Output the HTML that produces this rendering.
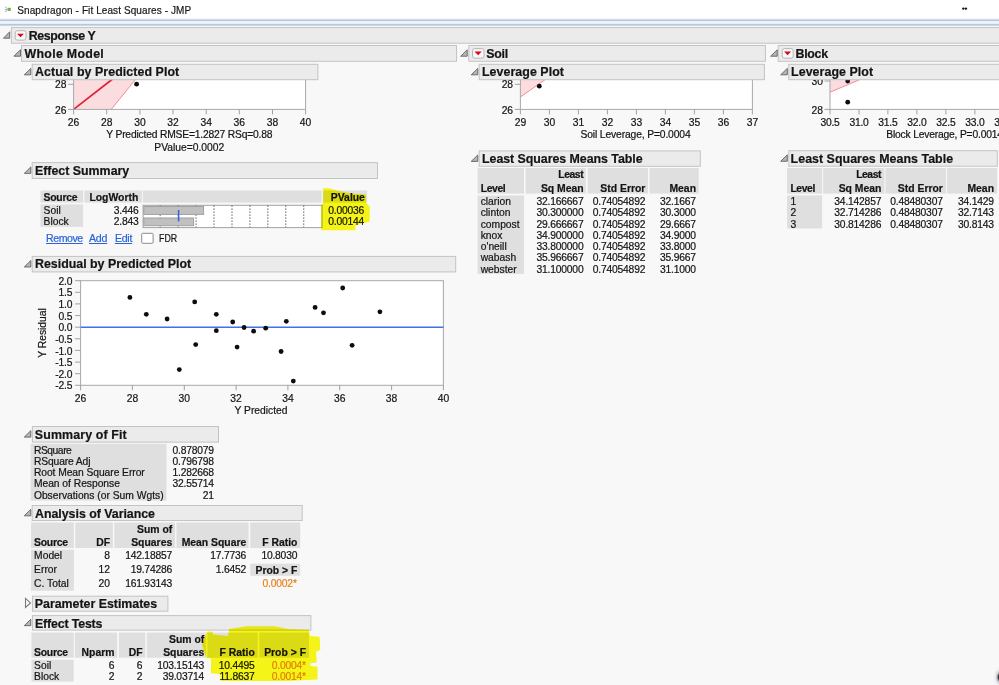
<!DOCTYPE html>
<html><head><meta charset="utf-8"><title>Snapdragon - Fit Least Squares - JMP</title><style>
html,body{margin:0;padding:0;overflow:hidden;background:#f8f8f8;}
#root{width:999px;height:685px;overflow:hidden;background:#f8f8f8;position:relative;font-family:"Liberation Sans",sans-serif;color:#141414;}
.ab{position:absolute;}
.cell{position:absolute;background:#dfdfdf;}
.hd{position:absolute;background:#ebebeb;border:1px solid #c4c4c4;box-sizing:border-box;}
.rb{position:absolute;background:#f6f6f6;border:1px solid #b9b9b9;border-radius:2.5px;box-sizing:border-box;}
.t{position:absolute;white-space:nowrap;line-height:1;-webkit-text-stroke:0.2px currentColor;}
</style></head>
<body>
<div id="root">
<svg class="ab" style="left:0;top:0" width="999" height="685" viewBox="0 0 999 685">
<rect x="0.00" y="0.00" width="999.00" height="18.60" fill="#fff"/>
<rect x="0.00" y="18.40" width="999.00" height="7.50" fill="#eff3f9"/>
<rect x="0.00" y="19.50" width="999.00" height="1.50" fill="#b3c7e0"/>
<rect x="0.00" y="23.90" width="999.00" height="1.90" fill="#b3c7e0"/>
<rect x="0.00" y="25.80" width="999.00" height="1.00" fill="#f8f6f3"/>
<g><path d="M5 6.7 L7.5 8.7 M4.8 9.4 L7.6 9.4 M5 11.9 L7.5 10.1" fill="none" stroke="#8d92cc" stroke-width="0.8"/><rect x="7.8" y="7.8" width="3" height="3.1" fill="#7cb233"/></g>
<circle cx="963.3" cy="8.6" r="1.2" fill="#111"/><circle cx="965.9" cy="8.6" r="1.2" fill="#111"/>
<defs><radialGradient id="blob" cx="0.5" cy="0.5" r="0.5"><stop offset="0" stop-color="#1e1e2e" stop-opacity="1"/><stop offset="0.27" stop-color="#1e1e2e" stop-opacity="0.9"/><stop offset="0.45" stop-color="#2a2a3a" stop-opacity="0.3"/><stop offset="0.7" stop-color="#444" stop-opacity="0.07"/><stop offset="1" stop-color="#444" stop-opacity="0"/></radialGradient></defs><ellipse cx="1000.2" cy="677.2" rx="7" ry="10.5" fill="url(#blob)"/>
<rect x="11.40" y="27.60" width="993.50" height="15.60" fill="#ebebeb" stroke="#c4c4c4" stroke-width="1" rx="0"/>
<polygon points="9.70,31.80 9.70,38.20 3.50,38.20" fill="#b6b6b6" stroke="#6c6c6c" stroke-width="1" stroke-linejoin="round"/>
<rect x="15.20" y="30.70" width="10.80" height="9.40" rx="2.2" fill="#f7f7f7" stroke="#b7b7b7" stroke-width="1"/>
<polygon points="17.06,33.63 23.90,33.63 20.48,37.27" fill="#d20c16"/>
<rect x="21.50" y="45.50" width="435.00" height="15.80" fill="#ebebeb" stroke="#c4c4c4" stroke-width="1" rx="0"/>
<polygon points="20.50,49.80 20.50,56.20 13.90,56.20" fill="#b6b6b6" stroke="#6c6c6c" stroke-width="1" stroke-linejoin="round"/>
<rect x="468.80" y="45.50" width="296.60" height="15.80" fill="#ebebeb" stroke="#c4c4c4" stroke-width="1" rx="0"/>
<polygon points="467.20,49.80 467.20,56.20 460.70,56.20" fill="#b6b6b6" stroke="#6c6c6c" stroke-width="1" stroke-linejoin="round"/>
<rect x="472.50" y="48.60" width="11.50" height="9.60" rx="2.2" fill="#f7f7f7" stroke="#b7b7b7" stroke-width="1"/>
<polygon points="474.50,51.60 481.75,51.60 478.12,55.31" fill="#d20c16"/>
<rect x="778.20" y="45.50" width="226.70" height="15.80" fill="#ebebeb" stroke="#c4c4c4" stroke-width="1" rx="0"/>
<polygon points="777.20,49.80 777.20,56.20 770.70,56.20" fill="#b6b6b6" stroke="#6c6c6c" stroke-width="1" stroke-linejoin="round"/>
<rect x="782.20" y="48.60" width="11.00" height="9.60" rx="2.2" fill="#f7f7f7" stroke="#b7b7b7" stroke-width="1"/>
<polygon points="784.10,51.60 791.06,51.60 787.58,55.31" fill="#d20c16"/>
<rect x="73.6" y="79" width="232.00000000000003" height="30.400000000000006" fill="#fff"/>
<polygon points="73.6,79 135.6,79 111.2,109.4 73.6,109.4" fill="#fbdcdf"/>
<line x1="111.2" y1="109.4" x2="135.8" y2="79" stroke="#f48c98" stroke-width="1"/>
<line x1="73.6" y1="109.4" x2="112.6" y2="79" stroke="#e3203a" stroke-width="1.7"/>
<circle cx="136.6" cy="84.2" r="2.4" fill="#0c0c0c"/>
<path d="M73.6 79 V109.4 H305.6 V79" fill="none" stroke="#a8a8a8" stroke-width="1"/>
<line x1="73.6" y1="109.4" x2="73.6" y2="114.4" stroke="#a0a0a0" stroke-width="1"/>
<line x1="106.7" y1="109.4" x2="106.7" y2="114.4" stroke="#a0a0a0" stroke-width="1"/>
<line x1="139.9" y1="109.4" x2="139.9" y2="114.4" stroke="#a0a0a0" stroke-width="1"/>
<line x1="173.0" y1="109.4" x2="173.0" y2="114.4" stroke="#a0a0a0" stroke-width="1"/>
<line x1="206.2" y1="109.4" x2="206.2" y2="114.4" stroke="#a0a0a0" stroke-width="1"/>
<line x1="239.3" y1="109.4" x2="239.3" y2="114.4" stroke="#a0a0a0" stroke-width="1"/>
<line x1="272.5" y1="109.4" x2="272.5" y2="114.4" stroke="#a0a0a0" stroke-width="1"/>
<line x1="305.6" y1="109.4" x2="305.6" y2="114.4" stroke="#a0a0a0" stroke-width="1"/>
<line x1="68.1" y1="84.3" x2="73.6" y2="84.3" stroke="#a0a0a0" stroke-width="1"/>
<line x1="68.1" y1="109.4" x2="73.6" y2="109.4" stroke="#a0a0a0" stroke-width="1"/>
<rect x="80.6" y="280.7" width="362.79999999999995" height="104.60000000000002" fill="#fff" stroke="#a8a8a8" stroke-width="1"/>
<line x1="80.6" y1="327.2" x2="443.4" y2="327.2" stroke="#3d72ec" stroke-width="1.5"/>
<line x1="80.6" y1="385.3" x2="80.6" y2="390.3" stroke="#a0a0a0" stroke-width="1"/>
<line x1="132.4" y1="385.3" x2="132.4" y2="390.3" stroke="#a0a0a0" stroke-width="1"/>
<line x1="184.3" y1="385.3" x2="184.3" y2="390.3" stroke="#a0a0a0" stroke-width="1"/>
<line x1="236.1" y1="385.3" x2="236.1" y2="390.3" stroke="#a0a0a0" stroke-width="1"/>
<line x1="287.9" y1="385.3" x2="287.9" y2="390.3" stroke="#a0a0a0" stroke-width="1"/>
<line x1="339.7" y1="385.3" x2="339.7" y2="390.3" stroke="#a0a0a0" stroke-width="1"/>
<line x1="391.6" y1="385.3" x2="391.6" y2="390.3" stroke="#a0a0a0" stroke-width="1"/>
<line x1="443.4" y1="385.3" x2="443.4" y2="390.3" stroke="#a0a0a0" stroke-width="1"/>
<line x1="75.1" y1="280.7" x2="80.6" y2="280.7" stroke="#a0a0a0" stroke-width="1"/>
<line x1="75.1" y1="292.3" x2="80.6" y2="292.3" stroke="#a0a0a0" stroke-width="1"/>
<line x1="75.1" y1="303.9" x2="80.6" y2="303.9" stroke="#a0a0a0" stroke-width="1"/>
<line x1="75.1" y1="315.6" x2="80.6" y2="315.6" stroke="#a0a0a0" stroke-width="1"/>
<line x1="75.1" y1="327.2" x2="80.6" y2="327.2" stroke="#a0a0a0" stroke-width="1"/>
<line x1="75.1" y1="338.8" x2="80.6" y2="338.8" stroke="#a0a0a0" stroke-width="1"/>
<line x1="75.1" y1="350.4" x2="80.6" y2="350.4" stroke="#a0a0a0" stroke-width="1"/>
<line x1="75.1" y1="362.1" x2="80.6" y2="362.1" stroke="#a0a0a0" stroke-width="1"/>
<line x1="75.1" y1="373.7" x2="80.6" y2="373.7" stroke="#a0a0a0" stroke-width="1"/>
<line x1="75.1" y1="385.3" x2="80.6" y2="385.3" stroke="#a0a0a0" stroke-width="1"/>
<circle cx="129.9" cy="297.4" r="2.4" fill="#0c0c0c"/>
<circle cx="146.3" cy="314.3" r="2.4" fill="#0c0c0c"/>
<circle cx="167.1" cy="319.0" r="2.4" fill="#0c0c0c"/>
<circle cx="179.3" cy="369.6" r="2.4" fill="#0c0c0c"/>
<circle cx="194.7" cy="301.9" r="2.4" fill="#0c0c0c"/>
<circle cx="195.7" cy="344.6" r="2.4" fill="#0c0c0c"/>
<circle cx="216.3" cy="314.3" r="2.4" fill="#0c0c0c"/>
<circle cx="216.3" cy="330.7" r="2.4" fill="#0c0c0c"/>
<circle cx="232.7" cy="322.0" r="2.4" fill="#0c0c0c"/>
<circle cx="237.1" cy="347.1" r="2.4" fill="#0c0c0c"/>
<circle cx="244.1" cy="327.5" r="2.4" fill="#0c0c0c"/>
<circle cx="253.6" cy="331.2" r="2.4" fill="#0c0c0c"/>
<circle cx="265.7" cy="328.2" r="2.4" fill="#0c0c0c"/>
<circle cx="281.1" cy="351.5" r="2.4" fill="#0c0c0c"/>
<circle cx="286.3" cy="321.3" r="2.4" fill="#0c0c0c"/>
<circle cx="293.3" cy="381.1" r="2.4" fill="#0c0c0c"/>
<circle cx="315.1" cy="307.4" r="2.4" fill="#0c0c0c"/>
<circle cx="323.5" cy="312.8" r="2.4" fill="#0c0c0c"/>
<circle cx="342.7" cy="288.0" r="2.4" fill="#0c0c0c"/>
<circle cx="352.1" cy="345.3" r="2.4" fill="#0c0c0c"/>
<circle cx="379.9" cy="311.8" r="2.4" fill="#0c0c0c"/>
<rect x="520.4" y="79" width="232.0" height="30.400000000000006" fill="#fff"/>
<polygon points="520.4,79 545.8,79 520.4,97" fill="#fbdcdf"/>
<line x1="520.4" y1="97" x2="546" y2="79" stroke="#f48c98" stroke-width="1"/>
<circle cx="539.3" cy="86.2" r="2.4" fill="#0c0c0c"/>
<path d="M520.4 79 V109.4 H752.4 V79" fill="none" stroke="#a8a8a8" stroke-width="1"/>
<line x1="520.4" y1="109.4" x2="520.4" y2="114.4" stroke="#a0a0a0" stroke-width="1"/>
<line x1="549.4" y1="109.4" x2="549.4" y2="114.4" stroke="#a0a0a0" stroke-width="1"/>
<line x1="578.4" y1="109.4" x2="578.4" y2="114.4" stroke="#a0a0a0" stroke-width="1"/>
<line x1="607.4" y1="109.4" x2="607.4" y2="114.4" stroke="#a0a0a0" stroke-width="1"/>
<line x1="636.4" y1="109.4" x2="636.4" y2="114.4" stroke="#a0a0a0" stroke-width="1"/>
<line x1="665.4" y1="109.4" x2="665.4" y2="114.4" stroke="#a0a0a0" stroke-width="1"/>
<line x1="694.4" y1="109.4" x2="694.4" y2="114.4" stroke="#a0a0a0" stroke-width="1"/>
<line x1="723.4" y1="109.4" x2="723.4" y2="114.4" stroke="#a0a0a0" stroke-width="1"/>
<line x1="752.4" y1="109.4" x2="752.4" y2="114.4" stroke="#a0a0a0" stroke-width="1"/>
<line x1="514.9" y1="84.3" x2="520.4" y2="84.3" stroke="#a0a0a0" stroke-width="1"/>
<line x1="514.9" y1="109.4" x2="520.4" y2="109.4" stroke="#a0a0a0" stroke-width="1"/>
<rect x="830.0" y="79" width="175.0" height="30.400000000000006" fill="#fff"/>
<polygon points="830.0,79 861,79 830.0,92.2" fill="#fbdcdf"/>
<line x1="830.0" y1="92.2" x2="861.2" y2="79" stroke="#f48c98" stroke-width="1"/>
<circle cx="847.7" cy="81" r="2.4" fill="#0c0c0c"/>
<circle cx="847.7" cy="102.2" r="2.4" fill="#0c0c0c"/>
<path d="M830.0 79 V109.4 H1005" fill="none" stroke="#a8a8a8" stroke-width="1"/>
<line x1="830.0" y1="109.4" x2="830.0" y2="114.4" stroke="#a0a0a0" stroke-width="1"/>
<line x1="859.0" y1="109.4" x2="859.0" y2="114.4" stroke="#a0a0a0" stroke-width="1"/>
<line x1="887.9" y1="109.4" x2="887.9" y2="114.4" stroke="#a0a0a0" stroke-width="1"/>
<line x1="916.9" y1="109.4" x2="916.9" y2="114.4" stroke="#a0a0a0" stroke-width="1"/>
<line x1="945.9" y1="109.4" x2="945.9" y2="114.4" stroke="#a0a0a0" stroke-width="1"/>
<line x1="974.9" y1="109.4" x2="974.9" y2="114.4" stroke="#a0a0a0" stroke-width="1"/>
<line x1="1003.8" y1="109.4" x2="1003.8" y2="114.4" stroke="#a0a0a0" stroke-width="1"/>
<line x1="824.5" y1="81" x2="830.0" y2="81" stroke="#a0a0a0" stroke-width="1"/>
<line x1="824.5" y1="109.4" x2="830.0" y2="109.4" stroke="#a0a0a0" stroke-width="1"/>
<rect x="32.20" y="64.30" width="285.70" height="15.40" fill="#ebebeb" stroke="#c4c4c4" stroke-width="1" rx="0"/>
<polygon points="30.80,68.40 30.80,74.80 24.30,74.80" fill="#b6b6b6" stroke="#6c6c6c" stroke-width="1" stroke-linejoin="round"/>
<rect x="479.20" y="64.30" width="285.20" height="15.40" fill="#ebebeb" stroke="#c4c4c4" stroke-width="1" rx="0"/>
<polygon points="477.80,68.40 477.80,74.80 471.20,74.80" fill="#b6b6b6" stroke="#6c6c6c" stroke-width="1" stroke-linejoin="round"/>
<rect x="788.80" y="64.30" width="216.10" height="15.40" fill="#ebebeb" stroke="#c4c4c4" stroke-width="1" rx="0"/>
<polygon points="787.30,68.40 787.30,74.80 780.70,74.80" fill="#b6b6b6" stroke="#6c6c6c" stroke-width="1" stroke-linejoin="round"/>
<rect x="32.20" y="162.60" width="345.30" height="15.90" fill="#ebebeb" stroke="#c4c4c4" stroke-width="1" rx="0"/>
<polygon points="30.80,166.95 30.80,173.35 24.30,173.35" fill="#b6b6b6" stroke="#6c6c6c" stroke-width="1" stroke-linejoin="round"/>
<rect x="40.45" y="190.50" width="42.70" height="12.10" fill="#dfdfdf"/>
<rect x="84.35" y="190.50" width="57.60" height="12.10" fill="#dfdfdf"/>
<rect x="142.85" y="190.50" width="178.80" height="12.10" fill="#dfdfdf"/>
<rect x="322.75" y="190.50" width="44.40" height="12.10" fill="#dfdfdf"/>
<rect x="40.45" y="204.40" width="42.70" height="22.50" fill="#dfdfdf"/>
<rect x="143.1" y="205.3" width="178.9" height="22.3" fill="#fff" stroke="#a2a2a2" stroke-width="1"/>
<line x1="160.2" y1="205.5" x2="160.2" y2="227.3" stroke="#666" stroke-width="1.25" stroke-dasharray="1.3,1.7"/>
<line x1="178.2" y1="205.5" x2="178.2" y2="227.3" stroke="#666" stroke-width="1.25" stroke-dasharray="1.3,1.7"/>
<line x1="196.1" y1="205.5" x2="196.1" y2="227.3" stroke="#666" stroke-width="1.25" stroke-dasharray="1.3,1.7"/>
<line x1="214.0" y1="205.5" x2="214.0" y2="227.3" stroke="#666" stroke-width="1.25" stroke-dasharray="1.3,1.7"/>
<line x1="232.0" y1="205.5" x2="232.0" y2="227.3" stroke="#666" stroke-width="1.25" stroke-dasharray="1.3,1.7"/>
<line x1="249.9" y1="205.5" x2="249.9" y2="227.3" stroke="#666" stroke-width="1.25" stroke-dasharray="1.3,1.7"/>
<line x1="267.8" y1="205.5" x2="267.8" y2="227.3" stroke="#666" stroke-width="1.25" stroke-dasharray="1.3,1.7"/>
<line x1="285.7" y1="205.5" x2="285.7" y2="227.3" stroke="#666" stroke-width="1.25" stroke-dasharray="1.3,1.7"/>
<line x1="303.7" y1="205.5" x2="303.7" y2="227.3" stroke="#666" stroke-width="1.25" stroke-dasharray="1.3,1.7"/>
<rect x="143.8" y="206.5" width="59.8" height="7.9" fill="#c0c0c0" stroke="#a0a0a0" stroke-width="1"/>
<rect x="143.8" y="218.0" width="49.8" height="7.7" fill="#c0c0c0" stroke="#a0a0a0" stroke-width="1"/>
<line x1="178.6" y1="210" x2="178.6" y2="221.4" stroke="#2f62e4" stroke-width="1.5"/>
<rect x="141.70" y="233.30" width="11.40" height="10.00" fill="#fff" stroke="#8c8c8c" stroke-width="1" rx="1"/>
<rect x="32.20" y="256.40" width="423.50" height="15.50" fill="#ebebeb" stroke="#c4c4c4" stroke-width="1" rx="0"/>
<polygon points="30.80,260.55 30.80,266.95 24.30,266.95" fill="#b6b6b6" stroke="#6c6c6c" stroke-width="1" stroke-linejoin="round"/>
<rect x="32.40" y="426.50" width="186.10" height="15.60" fill="#ebebeb" stroke="#c4c4c4" stroke-width="1" rx="0"/>
<polygon points="30.80,430.70 30.80,437.10 24.30,437.10" fill="#b6b6b6" stroke="#6c6c6c" stroke-width="1" stroke-linejoin="round"/>
<rect x="30.65" y="443.80" width="135.80" height="56.80" fill="#dfdfdf"/>
<rect x="32.20" y="505.50" width="270.00" height="15.00" fill="#ebebeb" stroke="#c4c4c4" stroke-width="1" rx="0"/>
<polygon points="30.80,509.40 30.80,515.80 24.30,515.80" fill="#b6b6b6" stroke="#6c6c6c" stroke-width="1" stroke-linejoin="round"/>
<rect x="31.05" y="522.50" width="42.80" height="25.50" fill="#dfdfdf"/>
<rect x="75.25" y="522.50" width="37.60" height="25.50" fill="#dfdfdf"/>
<rect x="114.25" y="522.50" width="60.80" height="25.50" fill="#dfdfdf"/>
<rect x="176.45" y="522.50" width="72.10" height="25.50" fill="#dfdfdf"/>
<rect x="250.25" y="522.50" width="50.00" height="25.50" fill="#dfdfdf"/>
<rect x="31.05" y="549.60" width="42.80" height="41.10" fill="#dfdfdf"/>
<rect x="250.25" y="563.70" width="50.00" height="12.10" fill="#dfdfdf"/>
<rect x="32.50" y="596.20" width="135.40" height="15.00" fill="#ebebeb" stroke="#c4c4c4" stroke-width="1" rx="0"/>
<polygon points="25.50,598.40 30.50,602.90 25.50,607.40" fill="#fbfbfb" stroke="#7a7a7a" stroke-width="1.1"/>
<rect x="32.50" y="615.60" width="278.40" height="14.50" fill="#ebebeb" stroke="#c4c4c4" stroke-width="1" rx="0"/>
<polygon points="30.80,619.25 30.80,625.65 24.30,625.65" fill="#b6b6b6" stroke="#6c6c6c" stroke-width="1" stroke-linejoin="round"/>
<rect x="31.45" y="632.60" width="42.30" height="25.10" fill="#dfdfdf"/>
<rect x="74.85" y="632.60" width="42.30" height="25.10" fill="#dfdfdf"/>
<rect x="118.95" y="632.60" width="26.40" height="25.10" fill="#dfdfdf"/>
<rect x="146.85" y="632.60" width="59.10" height="25.10" fill="#dfdfdf"/>
<rect x="207.35" y="632.60" width="50.40" height="25.10" fill="#dfdfdf"/>
<rect x="259.25" y="632.60" width="49.70" height="25.10" fill="#dfdfdf"/>
<rect x="31.45" y="659.80" width="42.30" height="21.80" fill="#dfdfdf"/>
<rect x="479.20" y="150.90" width="221.10" height="15.40" fill="#ebebeb" stroke="#c4c4c4" stroke-width="1" rx="0"/>
<polygon points="477.80,155.00 477.80,161.40 471.20,161.40" fill="#b6b6b6" stroke="#6c6c6c" stroke-width="1" stroke-linejoin="round"/>
<rect x="477.65" y="168.00" width="46.40" height="25.60" fill="#dfdfdf"/>
<rect x="525.65" y="168.00" width="60.10" height="25.60" fill="#dfdfdf"/>
<rect x="587.65" y="168.00" width="60.30" height="25.60" fill="#dfdfdf"/>
<rect x="649.55" y="168.00" width="49.20" height="25.60" fill="#dfdfdf"/>
<rect x="477.65" y="195.50" width="46.40" height="78.40" fill="#dfdfdf"/>
<rect x="788.80" y="150.70" width="208.50" height="15.50" fill="#ebebeb" stroke="#c4c4c4" stroke-width="1" rx="0"/>
<polygon points="787.30,154.85 787.30,161.25 780.70,161.25" fill="#b6b6b6" stroke="#6c6c6c" stroke-width="1" stroke-linejoin="round"/>
<rect x="787.05" y="168.00" width="35.10" height="25.60" fill="#dfdfdf"/>
<rect x="823.15" y="168.00" width="61.30" height="25.60" fill="#dfdfdf"/>
<rect x="885.45" y="168.00" width="60.60" height="25.60" fill="#dfdfdf"/>
<rect x="947.05" y="168.00" width="50.10" height="25.60" fill="#dfdfdf"/>
<rect x="787.05" y="195.40" width="35.10" height="33.10" fill="#dfdfdf"/>
</svg>
<div class="t" style="top:6.00px;font-size:10.0px;color:#1a1a1a;left:17.3px;letter-spacing:0.093px;">Snapdragon - Fit Least Squares - JMP</div>
<div class="t" style="top:30.00px;font-size:12.4px;font-weight:bold;left:28.8px;letter-spacing:-0.420px;">Response Y</div>
<div class="t" style="top:48.00px;font-size:12.4px;font-weight:bold;left:24.5px;letter-spacing:0.290px;">Whole Model</div>
<div class="t" style="top:48.00px;font-size:12.4px;font-weight:bold;left:486.3px;letter-spacing:-0.305px;">Soil</div>
<div class="t" style="top:48.00px;font-size:12.4px;font-weight:bold;left:795.6px;letter-spacing:-0.310px;">Block</div>
<div class="t" style="top:118.00px;font-size:10.3px;left:73.6px;transform:translateX(-50%);">26</div>
<div class="t" style="top:118.00px;font-size:10.3px;left:106.7px;transform:translateX(-50%);">28</div>
<div class="t" style="top:118.00px;font-size:10.3px;left:139.9px;transform:translateX(-50%);">30</div>
<div class="t" style="top:118.00px;font-size:10.3px;left:173.0px;transform:translateX(-50%);">32</div>
<div class="t" style="top:118.00px;font-size:10.3px;left:206.2px;transform:translateX(-50%);">34</div>
<div class="t" style="top:118.00px;font-size:10.3px;left:239.3px;transform:translateX(-50%);">36</div>
<div class="t" style="top:118.00px;font-size:10.3px;left:272.5px;transform:translateX(-50%);">38</div>
<div class="t" style="top:118.00px;font-size:10.3px;left:305.6px;transform:translateX(-50%);">40</div>
<div class="t" style="top:80.00px;font-size:10.3px;right:932.50px;">28</div>
<div class="t" style="top:106.00px;font-size:10.3px;right:932.50px;">26</div>
<div class="t" style="top:130.00px;font-size:10.3px;left:189.3px;transform:translateX(-50%);letter-spacing:-0.191px;">Y Predicted RMSE=1.2827 RSq=0.88</div>
<div class="t" style="top:143.00px;font-size:10.3px;left:189.3px;transform:translateX(-50%);">PValue=0.0002</div>
<div class="t" style="top:118.00px;font-size:10.3px;left:520.4px;transform:translateX(-50%);">29</div>
<div class="t" style="top:118.00px;font-size:10.3px;left:549.4px;transform:translateX(-50%);">30</div>
<div class="t" style="top:118.00px;font-size:10.3px;left:578.4px;transform:translateX(-50%);">31</div>
<div class="t" style="top:118.00px;font-size:10.3px;left:607.4px;transform:translateX(-50%);">32</div>
<div class="t" style="top:118.00px;font-size:10.3px;left:636.4px;transform:translateX(-50%);">33</div>
<div class="t" style="top:118.00px;font-size:10.3px;left:665.4px;transform:translateX(-50%);">34</div>
<div class="t" style="top:118.00px;font-size:10.3px;left:694.4px;transform:translateX(-50%);">35</div>
<div class="t" style="top:118.00px;font-size:10.3px;left:723.4px;transform:translateX(-50%);">36</div>
<div class="t" style="top:118.00px;font-size:10.3px;left:752.4px;transform:translateX(-50%);">37</div>
<div class="t" style="top:80.00px;font-size:10.3px;right:485.90px;">28</div>
<div class="t" style="top:106.00px;font-size:10.3px;right:485.90px;">26</div>
<div class="t" style="top:130.00px;font-size:10.3px;left:635.5px;transform:translateX(-50%);letter-spacing:-0.134px;">Soil Leverage, P=0.0004</div>
<div class="t" style="top:118.00px;font-size:10.3px;left:830.0px;transform:translateX(-50%);letter-spacing:-0.200px;">30.5</div>
<div class="t" style="top:118.00px;font-size:10.3px;left:859.0px;transform:translateX(-50%);letter-spacing:-0.200px;">31.0</div>
<div class="t" style="top:118.00px;font-size:10.3px;left:887.9px;transform:translateX(-50%);letter-spacing:-0.200px;">31.5</div>
<div class="t" style="top:118.00px;font-size:10.3px;left:916.9px;transform:translateX(-50%);letter-spacing:-0.200px;">32.0</div>
<div class="t" style="top:118.00px;font-size:10.3px;left:945.9px;transform:translateX(-50%);letter-spacing:-0.200px;">32.5</div>
<div class="t" style="top:118.00px;font-size:10.3px;left:974.9px;transform:translateX(-50%);letter-spacing:-0.200px;">33.0</div>
<div class="t" style="top:118.00px;font-size:10.3px;left:1003.8px;transform:translateX(-50%);letter-spacing:-0.200px;">33.5</div>
<div class="t" style="top:77.00px;font-size:10.3px;right:176.00px;clip-path:inset(2.9px 0 0 0);">30</div>
<div class="t" style="top:106.00px;font-size:10.3px;right:176.00px;">28</div>
<div class="t" style="top:130.00px;font-size:10.3px;left:886.3px;letter-spacing:-0.191px;">Block Leverage, P=0.0014</div>
<div class="t" style="top:66.00px;font-size:12.4px;font-weight:bold;left:35.1px;letter-spacing:0.070px;">Actual by Predicted Plot</div>
<div class="t" style="top:66.00px;font-size:12.4px;font-weight:bold;left:482.0px;letter-spacing:0.056px;">Leverage Plot</div>
<div class="t" style="top:66.00px;font-size:12.4px;font-weight:bold;left:791.1px;letter-spacing:0.056px;">Leverage Plot</div>
<div class="t" style="top:165.00px;font-size:12.4px;font-weight:bold;left:35.0px;letter-spacing:-0.010px;">Effect Summary</div>
<div class="t" style="top:193.00px;font-size:10.4px;font-weight:bold;left:43.6px;letter-spacing:-0.272px;">Source</div>
<div class="t" style="top:193.00px;font-size:10.4px;font-weight:bold;left:89.4px;">LogWorth</div>
<div class="t" style="top:193.00px;font-size:10.4px;font-weight:bold;right:634.10px;">PValue</div>
<div class="t" style="top:206.00px;font-size:10.3px;left:43.6px;">Soil</div>
<div class="t" style="top:217.00px;font-size:10.3px;left:43.6px;">Block</div>
<div class="t" style="top:206.00px;font-size:10.3px;right:860.40px;letter-spacing:-0.200px;">3.446</div>
<div class="t" style="top:217.00px;font-size:10.3px;right:860.40px;letter-spacing:-0.200px;">2.843</div>
<div class="t" style="top:206.00px;font-size:10.3px;right:634.90px;letter-spacing:-0.200px;">0.00036</div>
<div class="t" style="top:217.00px;font-size:10.3px;right:634.90px;letter-spacing:-0.200px;">0.00144</div>
<div class="t" style="top:233.00px;font-size:10.600000000000001px;color:#2a62d8;left:46.0px;text-decoration:underline;text-decoration-thickness:0.8px;text-underline-offset:1px;letter-spacing:-0.442px;">Remove</div>
<div class="t" style="top:233.00px;font-size:10.600000000000001px;color:#2a62d8;left:88.9px;text-decoration:underline;text-decoration-thickness:0.8px;text-underline-offset:1px;letter-spacing:-0.153px;">Add</div>
<div class="t" style="top:233.00px;font-size:10.600000000000001px;color:#2a62d8;left:114.9px;text-decoration:underline;text-decoration-thickness:0.8px;text-underline-offset:1px;letter-spacing:-0.266px;">Edit</div>
<div class="t" style="top:234.00px;font-size:10.3px;left:158.6px;transform:scaleX(0.86);transform-origin:0 0;">FDR</div>
<div class="t" style="top:258.00px;font-size:12.4px;font-weight:bold;left:35.0px;letter-spacing:-0.004px;">Residual by Predicted Plot</div>
<div class="t" style="top:394.00px;font-size:10.3px;left:80.6px;transform:translateX(-50%);">26</div>
<div class="t" style="top:394.00px;font-size:10.3px;left:132.4px;transform:translateX(-50%);">28</div>
<div class="t" style="top:394.00px;font-size:10.3px;left:184.3px;transform:translateX(-50%);">30</div>
<div class="t" style="top:394.00px;font-size:10.3px;left:236.1px;transform:translateX(-50%);">32</div>
<div class="t" style="top:394.00px;font-size:10.3px;left:287.9px;transform:translateX(-50%);">34</div>
<div class="t" style="top:394.00px;font-size:10.3px;left:339.7px;transform:translateX(-50%);">36</div>
<div class="t" style="top:394.00px;font-size:10.3px;left:391.6px;transform:translateX(-50%);">38</div>
<div class="t" style="top:394.00px;font-size:10.3px;left:443.4px;transform:translateX(-50%);">40</div>
<div class="t" style="top:277.00px;font-size:10.3px;right:926.70px;letter-spacing:-0.200px;">2.0</div>
<div class="t" style="top:288.00px;font-size:10.3px;right:926.70px;letter-spacing:-0.200px;">1.5</div>
<div class="t" style="top:300.00px;font-size:10.3px;right:926.70px;letter-spacing:-0.200px;">1.0</div>
<div class="t" style="top:312.00px;font-size:10.3px;right:926.70px;letter-spacing:-0.200px;">0.5</div>
<div class="t" style="top:323.00px;font-size:10.3px;right:926.70px;letter-spacing:-0.200px;">0.0</div>
<div class="t" style="top:335.00px;font-size:10.3px;right:926.70px;letter-spacing:-0.200px;">-0.5</div>
<div class="t" style="top:347.00px;font-size:10.3px;right:926.70px;letter-spacing:-0.200px;">-1.0</div>
<div class="t" style="top:358.00px;font-size:10.3px;right:926.70px;letter-spacing:-0.200px;">-1.5</div>
<div class="t" style="top:370.00px;font-size:10.3px;right:926.70px;letter-spacing:-0.200px;">-2.0</div>
<div class="t" style="top:381.00px;font-size:10.3px;right:926.70px;letter-spacing:-0.200px;">-2.5</div>
<div class="t" style="top:406.00px;font-size:10.3px;left:261.0px;transform:translateX(-50%);">Y Predicted</div>
<div class="t" style="left:43.3px;top:332.7px;font-size:10.3px;transform:translate(-50%,-50%) rotate(-90deg);">Y Residual</div>
<div class="t" style="top:429.00px;font-size:12.4px;font-weight:bold;left:34.8px;letter-spacing:0.135px;">Summary of Fit</div>
<div class="t" style="top:446.00px;font-size:10.3px;left:33.9px;letter-spacing:-0.449px;">RSquare</div>
<div class="t" style="top:446.00px;font-size:10.3px;right:785.10px;letter-spacing:-0.200px;">0.878079</div>
<div class="t" style="top:457.00px;font-size:10.3px;left:33.9px;letter-spacing:-0.121px;">RSquare Adj</div>
<div class="t" style="top:457.00px;font-size:10.3px;right:785.10px;letter-spacing:-0.200px;">0.796798</div>
<div class="t" style="top:468.00px;font-size:10.3px;left:33.9px;letter-spacing:-0.063px;">Root Mean Square Error</div>
<div class="t" style="top:468.00px;font-size:10.3px;right:785.10px;letter-spacing:-0.200px;">1.282668</div>
<div class="t" style="top:479.00px;font-size:10.3px;left:33.9px;letter-spacing:-0.027px;">Mean of Response</div>
<div class="t" style="top:479.00px;font-size:10.3px;right:785.10px;letter-spacing:-0.200px;">32.55714</div>
<div class="t" style="top:491.00px;font-size:10.3px;left:33.9px;letter-spacing:-0.007px;">Observations (or Sum Wgts)</div>
<div class="t" style="top:491.00px;font-size:10.3px;right:784.90px;">21</div>
<div class="t" style="top:508.00px;font-size:12.4px;font-weight:bold;left:35.0px;letter-spacing:-0.027px;">Analysis of Variance</div>
<div class="t" style="top:538.00px;font-size:10.4px;font-weight:bold;left:34.1px;letter-spacing:-0.272px;">Source</div>
<div class="t" style="top:538.00px;font-size:10.4px;font-weight:bold;right:889.00px;">DF</div>
<div class="t" style="top:525.00px;font-size:10.4px;font-weight:bold;right:826.80px;">Sum of</div>
<div class="t" style="top:538.00px;font-size:10.4px;font-weight:bold;right:826.80px;">Squares</div>
<div class="t" style="top:538.00px;font-size:10.4px;font-weight:bold;right:752.70px;">Mean Square</div>
<div class="t" style="top:538.00px;font-size:10.4px;font-weight:bold;right:701.60px;">F Ratio</div>
<div class="t" style="top:551.00px;font-size:10.3px;left:34.1px;">Model</div>
<div class="t" style="top:551.00px;font-size:10.3px;right:889.00px;">8</div>
<div class="t" style="top:551.00px;font-size:10.3px;right:827.00px;letter-spacing:-0.200px;">142.18857</div>
<div class="t" style="top:551.00px;font-size:10.3px;right:752.90px;letter-spacing:-0.200px;">17.7736</div>
<div class="t" style="top:551.00px;font-size:10.3px;right:701.80px;letter-spacing:-0.200px;">10.8030</div>
<div class="t" style="top:565.00px;font-size:10.3px;left:34.1px;">Error</div>
<div class="t" style="top:565.00px;font-size:10.3px;right:889.00px;">12</div>
<div class="t" style="top:565.00px;font-size:10.3px;right:827.00px;letter-spacing:-0.200px;">19.74286</div>
<div class="t" style="top:565.00px;font-size:10.3px;right:752.90px;letter-spacing:-0.200px;">1.6452</div>
<div class="t" style="top:579.00px;font-size:10.3px;left:34.1px;">C. Total</div>
<div class="t" style="top:579.00px;font-size:10.3px;right:889.00px;">20</div>
<div class="t" style="top:579.00px;font-size:10.3px;right:827.00px;letter-spacing:-0.200px;">161.93143</div>
<div class="t" style="top:566.00px;font-size:10.4px;font-weight:bold;right:701.60px;">Prob &gt; F</div>
<div class="t" style="top:579.00px;font-size:10.3px;color:#e8801a;right:702.30px;letter-spacing:-0.200px;">0.0002*</div>
<div class="t" style="top:598.00px;font-size:12.4px;font-weight:bold;left:34.8px;letter-spacing:-0.016px;">Parameter Estimates</div>
<div class="t" style="top:618.00px;font-size:12.4px;font-weight:bold;left:35.0px;letter-spacing:-0.169px;">Effect Tests</div>
<div class="t" style="top:648.00px;font-size:10.4px;font-weight:bold;left:34.1px;letter-spacing:-0.272px;">Source</div>
<div class="t" style="top:648.00px;font-size:10.4px;font-weight:bold;right:884.50px;">Nparm</div>
<div class="t" style="top:648.00px;font-size:10.4px;font-weight:bold;right:856.50px;">DF</div>
<div class="t" style="top:635.00px;font-size:10.4px;font-weight:bold;right:794.80px;">Sum of</div>
<div class="t" style="top:648.00px;font-size:10.4px;font-weight:bold;right:794.80px;">Squares</div>
<div class="t" style="top:648.00px;font-size:10.4px;font-weight:bold;right:744.20px;">F Ratio</div>
<div class="t" style="top:648.00px;font-size:10.4px;font-weight:bold;right:693.00px;">Prob &gt; F</div>
<div class="t" style="top:661.00px;font-size:10.3px;left:34.1px;">Soil</div>
<div class="t" style="top:661.00px;font-size:10.3px;right:884.50px;">6</div>
<div class="t" style="top:661.00px;font-size:10.3px;right:856.50px;">6</div>
<div class="t" style="top:661.00px;font-size:10.3px;right:795.00px;letter-spacing:-0.200px;">103.15143</div>
<div class="t" style="top:661.00px;font-size:10.3px;right:744.40px;letter-spacing:-0.200px;">10.4495</div>
<div class="t" style="top:661.00px;font-size:10.3px;color:#e8801a;right:693.20px;letter-spacing:-0.200px;">0.0004*</div>
<div class="t" style="top:672.00px;font-size:10.3px;left:34.1px;">Block</div>
<div class="t" style="top:672.00px;font-size:10.3px;right:884.50px;">2</div>
<div class="t" style="top:672.00px;font-size:10.3px;right:856.50px;">2</div>
<div class="t" style="top:672.00px;font-size:10.3px;right:795.00px;letter-spacing:-0.200px;">39.03714</div>
<div class="t" style="top:672.00px;font-size:10.3px;right:744.40px;letter-spacing:-0.200px;">11.8637</div>
<div class="t" style="top:672.00px;font-size:10.3px;color:#e8801a;right:693.20px;letter-spacing:-0.200px;">0.0014*</div>
<div class="t" style="top:153.00px;font-size:12.4px;font-weight:bold;left:482.0px;letter-spacing:-0.040px;">Least Squares Means Table</div>
<div class="t" style="top:184.00px;font-size:10.4px;font-weight:bold;left:480.7px;letter-spacing:-0.396px;">Level</div>
<div class="t" style="top:170.00px;font-size:10.4px;font-weight:bold;right:415.87px;letter-spacing:-0.471px;">Least</div>
<div class="t" style="top:184.00px;font-size:10.4px;font-weight:bold;right:415.40px;">Sq Mean</div>
<div class="t" style="top:184.00px;font-size:10.4px;font-weight:bold;right:353.60px;">Std Error</div>
<div class="t" style="top:184.00px;font-size:10.4px;font-weight:bold;right:303.00px;">Mean</div>
<div class="t" style="top:197.00px;font-size:10.3px;left:480.7px;">clarion</div>
<div class="t" style="top:197.00px;font-size:10.3px;right:415.60px;letter-spacing:-0.200px;">32.166667</div>
<div class="t" style="top:197.00px;font-size:10.3px;right:353.80px;letter-spacing:-0.200px;">0.74054892</div>
<div class="t" style="top:197.00px;font-size:10.3px;right:303.20px;letter-spacing:-0.200px;">32.1667</div>
<div class="t" style="top:208.00px;font-size:10.3px;left:480.7px;">clinton</div>
<div class="t" style="top:208.00px;font-size:10.3px;right:415.60px;letter-spacing:-0.200px;">30.300000</div>
<div class="t" style="top:208.00px;font-size:10.3px;right:353.80px;letter-spacing:-0.200px;">0.74054892</div>
<div class="t" style="top:208.00px;font-size:10.3px;right:303.20px;letter-spacing:-0.200px;">30.3000</div>
<div class="t" style="top:220.00px;font-size:10.3px;left:480.7px;">compost</div>
<div class="t" style="top:220.00px;font-size:10.3px;right:415.60px;letter-spacing:-0.200px;">29.666667</div>
<div class="t" style="top:220.00px;font-size:10.3px;right:353.80px;letter-spacing:-0.200px;">0.74054892</div>
<div class="t" style="top:220.00px;font-size:10.3px;right:303.20px;letter-spacing:-0.200px;">29.6667</div>
<div class="t" style="top:231.00px;font-size:10.3px;left:480.7px;">knox</div>
<div class="t" style="top:231.00px;font-size:10.3px;right:415.60px;letter-spacing:-0.200px;">34.900000</div>
<div class="t" style="top:231.00px;font-size:10.3px;right:353.80px;letter-spacing:-0.200px;">0.74054892</div>
<div class="t" style="top:231.00px;font-size:10.3px;right:303.20px;letter-spacing:-0.200px;">34.9000</div>
<div class="t" style="top:242.00px;font-size:10.3px;left:480.7px;">o'neill</div>
<div class="t" style="top:242.00px;font-size:10.3px;right:415.60px;letter-spacing:-0.200px;">33.800000</div>
<div class="t" style="top:242.00px;font-size:10.3px;right:353.80px;letter-spacing:-0.200px;">0.74054892</div>
<div class="t" style="top:242.00px;font-size:10.3px;right:303.20px;letter-spacing:-0.200px;">33.8000</div>
<div class="t" style="top:253.00px;font-size:10.3px;left:480.7px;">wabash</div>
<div class="t" style="top:253.00px;font-size:10.3px;right:415.60px;letter-spacing:-0.200px;">35.966667</div>
<div class="t" style="top:253.00px;font-size:10.3px;right:353.80px;letter-spacing:-0.200px;">0.74054892</div>
<div class="t" style="top:253.00px;font-size:10.3px;right:303.20px;letter-spacing:-0.200px;">35.9667</div>
<div class="t" style="top:265.00px;font-size:10.3px;left:480.7px;">webster</div>
<div class="t" style="top:265.00px;font-size:10.3px;right:415.60px;letter-spacing:-0.200px;">31.100000</div>
<div class="t" style="top:265.00px;font-size:10.3px;right:353.80px;letter-spacing:-0.200px;">0.74054892</div>
<div class="t" style="top:265.00px;font-size:10.3px;right:303.20px;letter-spacing:-0.200px;">31.1000</div>
<div class="t" style="top:153.00px;font-size:12.4px;font-weight:bold;left:790.6px;letter-spacing:0.036px;">Least Squares Means Table</div>
<div class="t" style="top:184.00px;font-size:10.4px;font-weight:bold;left:790.4px;letter-spacing:-0.396px;">Level</div>
<div class="t" style="top:170.00px;font-size:10.4px;font-weight:bold;right:118.07px;letter-spacing:-0.471px;">Least</div>
<div class="t" style="top:184.00px;font-size:10.4px;font-weight:bold;right:117.60px;">Sq Mean</div>
<div class="t" style="top:184.00px;font-size:10.4px;font-weight:bold;right:56.10px;">Std Error</div>
<div class="t" style="top:184.00px;font-size:10.4px;font-weight:bold;right:5.00px;">Mean</div>
<div class="t" style="top:197.00px;font-size:10.3px;left:790.4px;">1</div>
<div class="t" style="top:197.00px;font-size:10.3px;right:117.80px;letter-spacing:-0.200px;">34.142857</div>
<div class="t" style="top:197.00px;font-size:10.3px;right:56.30px;letter-spacing:-0.200px;">0.48480307</div>
<div class="t" style="top:197.00px;font-size:10.3px;right:5.20px;letter-spacing:-0.200px;">34.1429</div>
<div class="t" style="top:208.00px;font-size:10.3px;left:790.4px;">2</div>
<div class="t" style="top:208.00px;font-size:10.3px;right:117.80px;letter-spacing:-0.200px;">32.714286</div>
<div class="t" style="top:208.00px;font-size:10.3px;right:56.30px;letter-spacing:-0.200px;">0.48480307</div>
<div class="t" style="top:208.00px;font-size:10.3px;right:5.20px;letter-spacing:-0.200px;">32.7143</div>
<div class="t" style="top:220.00px;font-size:10.3px;left:790.4px;">3</div>
<div class="t" style="top:220.00px;font-size:10.3px;right:117.80px;letter-spacing:-0.200px;">30.814286</div>
<div class="t" style="top:220.00px;font-size:10.3px;right:56.30px;letter-spacing:-0.200px;">0.48480307</div>
<div class="t" style="top:220.00px;font-size:10.3px;right:5.20px;letter-spacing:-0.200px;">30.8143</div>
<svg class="ab" style="left:0;top:0;mix-blend-mode:multiply" width="999" height="685" viewBox="0 0 999 685">
<polygon points="323.2,188.3 328.8,188.3 338,190.8 351.3,193.4 366.1,194.4 366.1,202.6 369.7,206.7 369.7,221.5 364.6,223 355.4,225.6 355.4,230.2 321.2,230.2 321.2,205.6 323.2,202.6" fill="#fbfb18"/>
<polygon points="206.8,631.8 212.4,631.5 213.1,634.6 227.8,636 229.2,629 246.1,626.2 274.1,626.2 288.1,629 309.1,629.7 309.8,636 319.6,636.7 320.3,650 316.1,651.4 316.8,662.6 310.5,663.3 310.5,666.1 317.5,666.8 317.5,679.5 288.1,680.9 220.8,680.9 220.1,673.9 211,673.2 211,658.4 206.1,657.7 201.9,644.4" fill="#fbfb18"/>
</svg>
</div>
</body></html>
